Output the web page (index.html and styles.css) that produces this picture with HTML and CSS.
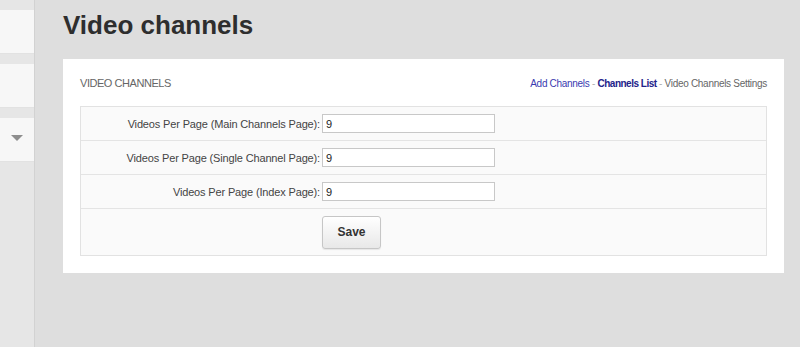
FILE: index.html
```html
<!DOCTYPE html>
<html lang="en">
  <head>
    <meta charset="UTF-8" />
    <title>Video channels</title>
    <link rel="stylesheet" href="styles.css">
  </head>
  <body>
    <div class="layout">
      <aside class="sidebar">
        <div class="side-box"></div>
        <div class="side-box"></div>
        <div class="side-box side-select"><span class="caret"></span></div>
      </aside>
      <main class="main">
        <h1 class="page-title">Video channels</h1>
        <div class="panel">
          <div class="panel-header">
            <span class="panel-title">VIDEO CHANNELS</span>
            <span class="crumbs">
              <a href="#" class="crumb">Add Channels</a>
              <span class="sep">-</span>
              <a href="#" class="crumb crumb-bold">Channels List</a>
              <span class="sep">-</span>
              <span class="crumb-current">Video Channels Settings</span>
            </span>
          </div>
          <form class="settings">
            <div class="row">
              <label class="row-label">Videos Per Page (Main Channels Page):</label>
              <input class="field" type="text" value="9" />
            </div>
            <div class="row">
              <label class="row-label">Videos Per Page (Single Channel Page):</label>
              <input class="field" type="text" value="9" />
            </div>
            <div class="row">
              <label class="row-label">Videos Per Page (Index Page):</label>
              <input class="field" type="text" value="9" />
            </div>
            <div class="row row-actions">
              <span class="row-label"></span>
              <button type="button" class="save-button">Save</button>
            </div>
          </form>
        </div>
      </main>
    </div>
  </body>
</html>
```

FILE: styles.css
```css
body {
  margin: 0;
  font-family: "Liberation Sans", Arial, sans-serif;
  background-color: #dedede;
  color: #333;
}
.layout {
  display: flex;
  min-height: 347px;
}
.sidebar {
  width: 34px;
  flex-shrink: 0;
  background-color: #e6e6e6;
  border-right: 1px solid #d2d2d2;
  padding-top: 10px;
  display: flex;
  flex-direction: column;
  gap: 10px;
}
.side-box {
  height: 43px;
  background-color: #f7f7f7;
  border-bottom: 1px solid #e2e2e2;
}
.side-select {
  display: flex;
  align-items: center;
  justify-content: center;
}
.caret {
  width: 0;
  height: 0;
  border-left: 6px solid transparent;
  border-right: 6px solid transparent;
  border-top: 6px solid #8e8e8e;
  margin-top: -4px;
}
.main {
  padding-left: 28px;
}
.page-title {
  margin: 10px 0 0;
  font-size: 26px;
  line-height: 30px;
  font-weight: bold;
  color: #2e2e2e;
}
.panel {
  margin-top: 19px;
  width: 687px;
  padding: 17px 17px 17px;
  background-color: #fff;
}
.panel-header {
  display: flex;
  justify-content: space-between;
  align-items: center;
  height: 14px;
  margin-bottom: 16px;
}
.panel-title {
  font-size: 11px;
  color: #666;
  letter-spacing: -0.45px;
}
.crumbs {
  font-size: 10px;
  letter-spacing: -0.3px;
  color: #777;
}
.crumb {
  color: #3a3ab0;
  text-decoration: none;
}
.crumb-bold {
  color: #23238a;
  font-weight: bold;
  letter-spacing: -0.5px;
}
.sep {
  color: #b0b0b0;
}
.crumb-current {
  color: #666;
}
.settings {
  border: 1px solid #e2e2e2;
  background-color: #fafafa;
}
.row {
  display: flex;
  align-items: center;
  height: 33px;
  border-bottom: 1px solid #e4e4e4;
}
.row:last-child {
  border-bottom: none;
}
.row-label {
  width: 239px;
  flex-shrink: 0;
  text-align: right;
  padding-right: 2px;
  font-size: 11px;
  letter-spacing: -0.15px;
  color: #444;
}
.field {
  width: 173px;
  height: 19px;
  box-sizing: border-box;
  border: 1px solid #c8c8c8;
  background-color: #fff;
  padding: 1px 3px;
  font-family: "Liberation Sans", Arial, sans-serif;
  font-size: 11px;
  color: #222;
}
.row-actions {
  height: 46px;
}
.save-button {
  width: 59px;
  height: 33px;
  border: 1px solid #c6c6c6;
  border-radius: 3px;
  background: linear-gradient(#ffffff, #e8e8e8);
  box-shadow: 0 1px 1px rgba(0, 0, 0, 0.08);
  font-family: "Liberation Sans", Arial, sans-serif;
  font-size: 12px;
  font-weight: bold;
  color: #333;
  cursor: pointer;
}
```
